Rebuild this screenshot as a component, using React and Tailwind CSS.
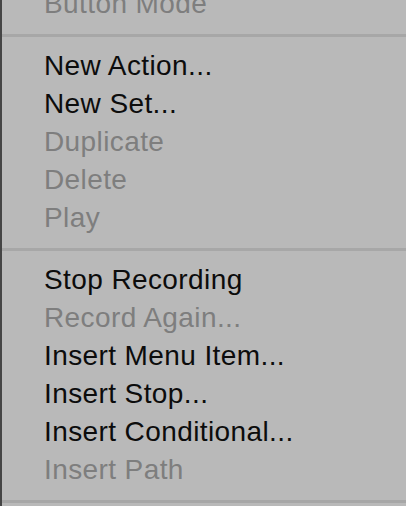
export default function App() {
  const groups = [
    [{ label: 'Button Mode', off: true }],
    [
      { label: 'New Action...' },
      { label: 'New Set...' },
      { label: 'Duplicate', off: true },
      { label: 'Delete', off: true },
      { label: 'Play', off: true },
    ],
    [
      { label: 'Stop Recording' },
      { label: 'Record Again...', off: true },
      { label: 'Insert Menu Item...' },
      { label: 'Insert Stop...' },
      { label: 'Insert Conditional...' },
      { label: 'Insert Path', off: true },
    ],
  ]

  return (
    <div className="w-[406px] h-[506px] overflow-hidden flex bg-[#b9b9b9]">
      <div className="w-[2px] shrink-0 bg-[#454545]" />
      <div className="flex-1 flex flex-col -mt-[15px]" style={{ fontFamily: '"Liberation Sans", Arial, sans-serif' }}>
        {groups.map((items, gi) => (
          <div key={gi} className="flex flex-col">
            {items.map((it) => (
              <div
                key={it.label}
                className={`h-[38px] shrink-0 flex items-center pl-[42px] text-[28px] leading-none tracking-[0.4px] ${it.off ? 'text-[#7e7e7e]' : 'text-[#0c0c0c]'}`}
              >
                {it.label}
              </div>
            ))}
            {/* separator */}
            <div className="h-[24px] shrink-0 flex items-center">
              <div className="h-[3px] w-full bg-[#a7a7a7]" />
            </div>
          </div>
        ))}
      </div>
    </div>
  )
}
